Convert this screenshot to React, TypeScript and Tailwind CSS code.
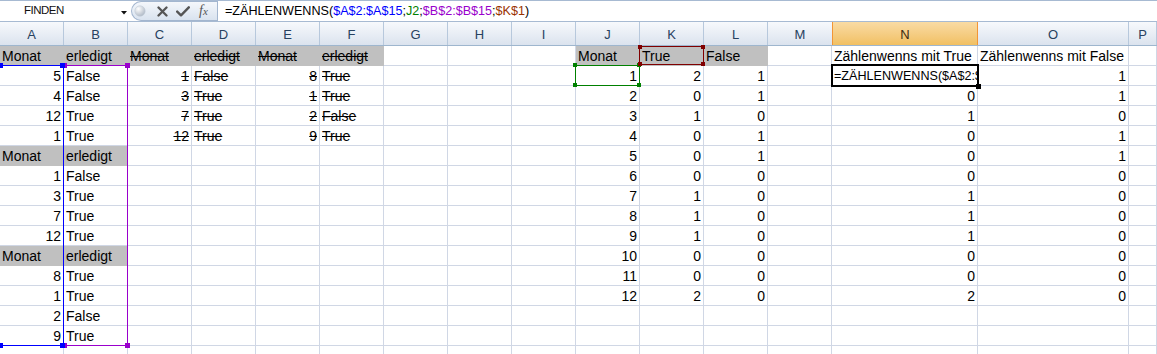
import React from 'react';

type C = { t: string; r?: boolean; g?: boolean; s?: boolean; f?: boolean };

const colW = [
  'w-[64px]', 'w-[64px]', 'w-[64px]', 'w-[64px]', 'w-[64px]', 'w-[64px]', 'w-[64px]',
  'w-[64px]', 'w-[64px]', 'w-[64px]', 'w-[64px]', 'w-[64px]', 'w-[64px]',
  'w-[146px]', 'w-[151px]', 'flex-1',
];
const letters = 'ABCDEFGHIJKLMNOP'.split('');

const n = (t: number, s = false): C => ({ t: String(t), r: true, s });
const tx = (t: string, s = false): C => ({ t, s });
const g = (t: string, s = false): C => ({ t, g: true, s });

const rows: Array<Record<number, C>> = [
  { 0: g('Monat'), 1: g('erledigt'), 2: g('Monat', true), 3: g('erledigt', true), 4: g('Monat', true), 5: g('erledigt', true), 9: g('Monat'), 10: g('True'), 11: g('False'), 13: tx('Zählenwenns mit True'), 14: tx('Zählenwenns mit False') },
  { 0: n(5), 1: tx('False'), 2: n(1, true), 3: tx('False', true), 4: n(8, true), 5: tx('True', true), 9: n(1), 10: n(2), 11: n(1), 13: { t: '=ZÄHLENWENNS($A$2:$', f: true }, 14: n(1) },
  { 0: n(4), 1: tx('False'), 2: n(3, true), 3: tx('True', true), 4: n(1, true), 5: tx('True', true), 9: n(2), 10: n(0), 11: n(1), 13: n(0), 14: n(1) },
  { 0: n(12), 1: tx('True'), 2: n(7, true), 3: tx('True', true), 4: n(2, true), 5: tx('False', true), 9: n(3), 10: n(1), 11: n(0), 13: n(1), 14: n(0) },
  { 0: n(1), 1: tx('True'), 2: n(12, true), 3: tx('True', true), 4: n(9, true), 5: tx('True', true), 9: n(4), 10: n(0), 11: n(1), 13: n(0), 14: n(1) },
  { 0: g('Monat'), 1: g('erledigt'), 9: n(5), 10: n(0), 11: n(1), 13: n(0), 14: n(1) },
  { 0: n(1), 1: tx('False'), 9: n(6), 10: n(0), 11: n(0), 13: n(0), 14: n(0) },
  { 0: n(3), 1: tx('True'), 9: n(7), 10: n(1), 11: n(0), 13: n(1), 14: n(0) },
  { 0: n(7), 1: tx('True'), 9: n(8), 10: n(1), 11: n(0), 13: n(1), 14: n(0) },
  { 0: n(12), 1: tx('True'), 9: n(9), 10: n(1), 11: n(0), 13: n(1), 14: n(0) },
  { 0: g('Monat'), 1: g('erledigt'), 9: n(10), 10: n(0), 11: n(0), 13: n(0), 14: n(0) },
  { 0: n(8), 1: tx('True'), 9: n(11), 10: n(0), 11: n(0), 13: n(0), 14: n(0) },
  { 0: n(1), 1: tx('True'), 9: n(12), 10: n(2), 11: n(0), 13: n(2), 14: n(0) },
  { 0: n(2), 1: tx('False') },
  { 0: n(9), 1: tx('True') },
  {},
];

function Cell({ c, i }: { c?: C; i: number }) {
  const base = 'h-[20px] shrink-0 border-r border-b px-[2px] leading-[20px] whitespace-nowrap overflow-hidden';
  const color = c?.g ? 'bg-[#c0c0c0] border-[#c0c0c0]' : 'border-[#d0d7e5]';
  const align = c?.r ? 'text-right' : 'text-left';
  const strike = c?.s ? 'line-through' : '';
  const size = c?.f ? 'text-[12.6px]' : 'text-[14px]';
  return (
    <div className={`${base} ${colW[i]} ${color} ${align} ${strike} ${size}`}>
      {c?.t ?? ''}
    </div>
  );
}

function Square({ cls }: { cls: string }) {
  return <div className={`absolute ${cls}`} />;
}

export default function App() {
  return (
    <div className="relative h-[354px] w-[1157px] overflow-hidden bg-white font-['Liberation_Sans',Arial,sans-serif] text-black">
      {/* Formula bar */}
      <div className="flex h-[22px] border-t border-b border-[#a7bad2] bg-white">
        <div className="relative flex w-[131px] items-center">
          <span className="pl-[24px] text-[11.5px] tracking-[-0.5px] text-[#111]">FINDEN</span>
          <svg className="absolute left-[121px] top-[10px]" width="6" height="4" viewBox="0 0 6 4">
            <path d="M0 0 H6 L3 3.5 Z" fill="#111" />
          </svg>
        </div>
        <div className="flex w-[86px] items-center rounded-l-full border border-r-0 border-[#a3b6cf] bg-linear-to-b from-[#f4f7fb] to-[#d9e3ef]">
          <svg className="ml-[2px]" width="12" height="12" viewBox="0 0 12 12">
            <defs>
              <radialGradient id="ball" cx="0.35" cy="0.3" r="0.75">
                <stop offset="0" stopColor="#ffffff" />
                <stop offset="1" stopColor="#aeb8c5" />
              </radialGradient>
            </defs>
            <circle cx="6" cy="6" r="5.2" fill="url(#ball)" stroke="#c3ccd8" strokeWidth="0.6" />
          </svg>
          <svg className="ml-[11px]" width="11" height="11" viewBox="0 0 11 11">
            <path d="M1.5 1.5 L9.5 9.5 M9.5 1.5 L1.5 9.5" stroke="#555" strokeWidth="2.3" strokeLinecap="round" />
          </svg>
          <svg className="ml-[8px]" width="14" height="11" viewBox="0 0 14 11">
            <path d="M1.2 5.6 L5 9.3 L12.8 1.3" stroke="#555" strokeWidth="2.4" fill="none" strokeLinecap="round" strokeLinejoin="round" />
          </svg>
          <span className="ml-[9px] font-['Liberation_Serif',serif] text-[14px] italic leading-none text-[#555]">
            f<span className="text-[11px]">x</span>
          </span>
        </div>
        <div className="flex flex-1 items-center border-l border-[#a3b6cf] pl-[7px] text-[12.6px] leading-none">
          <span>=ZÄHLENWENNS(</span>
          <span className="text-[#0000ff]">$A$2:$A$15</span>
          <span>;</span>
          <span className="text-[#008000]">J2</span>
          <span>;</span>
          <span className="text-[#9900cc]">$B$2:$B$15</span>
          <span>;</span>
          <span className="text-[#993300]">$K$1</span>
          <span>)</span>
        </div>
      </div>

      {/* Column headers */}
      <div className="flex h-[24px] border-b border-[#9eb6ce]">
        {letters.map((l, i) => (
          <div
            key={l}
            className={`${colW[i]} shrink-0 border-r pt-[3px] text-center text-[13px] leading-[20px] ${
              i === 13
                ? 'border-l border-[#f29536] bg-linear-to-b from-[#f9dba4] to-[#f1c062] text-[#3b2a10]'
                : 'border-[#b7c8dc] bg-linear-to-b from-[#f7f9fc] to-[#dbe3ee] text-[#27415f]'
            } ${i === 12 ? 'border-r-0' : ''}`}
          >
            {l}
          </div>
        ))}
      </div>

      {/* Rows */}
      <div className="flex flex-col">
        {rows.map((r, ri) => (
          <div key={ri} className="flex">
            {letters.map((_, ci) => (
              <Cell key={ci} c={r[ci]} i={ci} />
            ))}
          </div>
        ))}
      </div>

      {/* Reference range highlights */}
      <div className="absolute left-[63px] top-[65px] h-[281px] w-[65px] border border-[#9900cc]" />
      <Square cls="left-[125px] top-[63px] h-[5px] w-[5px] bg-[#9900cc]" />
      <Square cls="left-[125px] top-[343px] h-[5px] w-[5px] bg-[#9900cc]" />
      <Square cls="left-[62px] top-[63px] h-[5px] w-[5px] bg-[#9900cc]" />
      <Square cls="left-[62px] top-[343px] h-[5px] w-[5px] bg-[#9900cc]" />

      <div className="absolute left-[-1px] top-[65px] h-[281px] w-[65px] border border-[#0000ff]" />
      <Square cls="left-[0px] top-[63px] h-[5px] w-[3px] bg-[#0000ff]" />
      <Square cls="left-[60px] top-[63px] h-[5px] w-[5px] bg-[#0000ff]" />
      <Square cls="left-[0px] top-[343px] h-[5px] w-[3px] bg-[#0000ff]" />
      <Square cls="left-[60px] top-[343px] h-[5px] w-[5px] bg-[#0000ff]" />

      <div className="absolute left-[575px] top-[65px] h-[21px] w-[65px] border border-[#008000]" />
      <Square cls="left-[573px] top-[63px] h-[4px] w-[4px] bg-[#008000]" />
      <Square cls="left-[637px] top-[63px] h-[4px] w-[4px] bg-[#008000]" />
      <Square cls="left-[573px] top-[83px] h-[4px] w-[4px] bg-[#008000]" />
      <Square cls="left-[637px] top-[83px] h-[4px] w-[4px] bg-[#008000]" />

      <div className="absolute left-[639px] top-[46px] h-[19px] w-[65px] border border-[#800000]" />
      <Square cls="left-[638px] top-[45px] h-[4px] w-[4px] bg-[#800000]" />
      <Square cls="left-[701px] top-[45px] h-[4px] w-[4px] bg-[#800000]" />
      <Square cls="left-[638px] top-[62px] h-[4px] w-[4px] bg-[#800000]" />
      <Square cls="left-[701px] top-[62px] h-[4px] w-[4px] bg-[#800000]" />

      {/* Active cell N2 */}
      <div className="absolute left-[831px] top-[64px] h-[23px] w-[148px] border-2 border-black" />
      <Square cls="left-[976px] top-[84px] h-[5px] w-[5px] bg-black" />
    </div>
  );
}
